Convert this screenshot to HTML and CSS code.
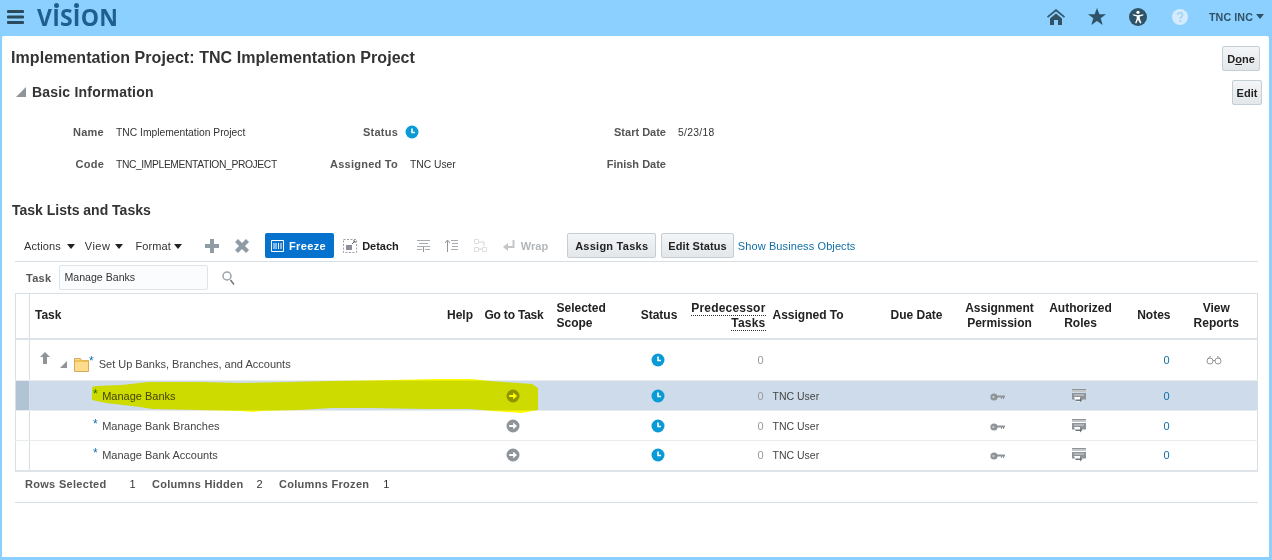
FILE: index.html
```html
<!DOCTYPE html>
<html lang="en">
<head>
<meta charset="utf-8">
<title>Implementation Project</title>
<link rel="stylesheet" href="styles.css">
</head>
<body>
<svg width="0" height="0" class="defs">
  <defs>
    <symbol id="clock" viewBox="0 0 14 14"><circle cx="7" cy="7" r="6.5" fill="#0a9ad6"/><path d="M7 3.5V7.5H10" fill="none" stroke="#fff" stroke-width="1.6"/></symbol>
    <symbol id="go" viewBox="0 0 14 14"><circle cx="7" cy="7" r="6.5" fill="#8f9499"/><path d="M3.2 6h4V3.4L11 7l-3.8 3.6V8h-4z" fill="#fff"/></symbol>
    <symbol id="key" viewBox="0 0 15 8"><circle cx="4" cy="4" r="3.6" fill="#8f9499"/><circle cx="3.4" cy="4" r="1" fill="#d5d8db"/><path d="M7 2.600h8v2h-1v1.400h-1V4.600h-1V6h-1V4.600H7z" fill="#8f9499"/></symbol>
    <symbol id="roles" viewBox="0 0 14 14"><path d="M0 0h14v1H0z" fill="#8f9499"/><path d="M0 1h14v2H0z" fill="#c4c7ca"/><path d="M0 4h14v6.500H0z" fill="#8f9499"/><path d="M2 5.500h10v1H2z" fill="#d5d8db"/><path d="M2 8h6v2l3 1.500L8 14v-1.500H4z" fill="#fff"/><path d="M3.500 10.500h4.500V9l2.500 2L8 13.500v-1.500H3.500z" fill="#6f777d"/></symbol>
  </defs>
</svg>
<header class="topbar">
  <div class="brand">
    <svg class="burger" viewBox="0 0 17 14" aria-hidden="true"><path d="M1 1.500h15M1 7h15M1 12.500h15" stroke="#2b4a5e" stroke-width="2.800" stroke-linecap="round" fill="none"/></svg>
    <span class="logo">V<span class="dot-i">I</span>S<span class="dot-i">I</span>ON</span>
  </div>
  <nav class="global">
    <svg class="g-home" viewBox="0 0 18 16" aria-hidden="true"><path d="M9 0 0 7.500l1 1.300L9 2.200l8 6.600 1-1.300zM3 9.500 9 4.500l6 5V16h-4v-5H7v5H3z" fill="#2f5266"/></svg>
    <svg class="g-star" viewBox="0 0 18 17" aria-hidden="true"><path d="m9 0 2.400 6.200H18l-5.300 4.100 2 6.700L9 13l-5.700 4 2-6.700L0 6.200h6.600z" fill="#2f5266"/></svg>
    <svg class="g-access" viewBox="0 0 18 18" aria-hidden="true"><circle cx="9" cy="9" r="9" fill="#2f5266"/><circle cx="9" cy="4.300" r="1.600" fill="#fff"/><path d="M3.500 6.200 9 7.200l5.500-1-.3 1.300-3.500 1 .2 2.500 1.500 4-1.200.4L9 11.800l-1.700 3.600-1.200-.4 1.500-4 .2-2.500-3.500-1z" fill="#fff"/></svg>
    <svg class="g-help" viewBox="0 0 16 16" aria-hidden="true"><circle cx="8" cy="8" r="8" fill="#d3ebfc"/><path d="M5.600 6a2.400 2.400 0 1 1 3.700 2c-.8.500-1 1-1 1.800" fill="none" stroke="#a3d4f5" stroke-width="1.700"/><rect x="7.300" y="11" width="1.900" height="1.900" fill="#a3d4f5"/></svg>
    <span class="account">TNC INC</span>
    <span class="account-caret"></span>
  </nav>
</header>

<main class="card">
  <div class="title-row">
    <h1>Implementation Project: TNC Implementation Project</h1>
    <button class="btn done">D<u>o</u>ne</button>
  </div>
  <div class="section-row">
    <h2><span class="tri"></span>Basic Information</h2>
    <button class="btn edit">Edit</button>
  </div>
  <div class="form">
    <span class="lbl">Name</span><span>TNC Implementation Project</span>
    <span class="lbl">Status</span><span><svg class="clock status-clock"><use href="#clock"/></svg></span>
    <span class="lbl tight">Start Date</span><span class="date">5/23/18</span>
    <span class="lbl">Code</span><span class="code">TNC_IMPLEMENTATION_PROJECT</span>
    <span class="lbl">Assigned To</span><span>TNC User</span>
    <span class="lbl tight">Finish Date</span><span></span>
  </div>

  <h3>Task Lists and Tasks</h3>

  <div class="toolbar">
    <span class="menu m-actions">Actions<i class="caret"></i></span>
    <span class="menu m-view">View<i class="caret"></i></span>
    <span class="menu m-format">Format<i class="caret"></i></span>
    <svg class="tb-plus" viewBox="0 0 14 14" aria-hidden="true"><path d="M5 0h4v5h5v4H9v5H5V9H0V5h5z" fill="#8f9ca5"/></svg>
    <svg class="tb-x" viewBox="0 0 14 14" aria-hidden="true"><path d="M3 0l4 4 4-4 3 3-4 4 4 4-3 3-4-4-4 4-3-3 4-4-4-4z" fill="#8f9ca5"/></svg>
    <span class="freeze">
      <svg viewBox="0 0 13 12" aria-hidden="true"><path d="M.5.500h12v11H.5zM3 3v6M5 3v6M7.500 3v6M10 3v6" fill="none" stroke="#fff"/></svg>Freeze
    </span>
    <span class="detach">
      <svg viewBox="0 0 14 14" aria-hidden="true"><path d="M.5.500h13v13H.5z" fill="none" stroke="#9aa0a5" stroke-dasharray="2 1.500"/><path d="M3 6h6v5H3z" fill="#8a9096"/><path d="M9 5l3-3M10 2h2v2" stroke="#666" fill="none"/></svg>Detach
    </span>
    <svg class="tb-i i1" viewBox="0 0 13 13" aria-hidden="true"><path d="M0 1h13v1H0zM2 4h9v1H2zM0 10h5v1H0zM8 10h5v1H8zM0 7h13v1H0z" fill="#a9adb1"/><path d="M6.500 8v5" stroke="#8f9499"/></svg>
    <svg class="tb-i i2" viewBox="0 0 13 13" aria-hidden="true"><path d="M6 1h7v1H6zM7 4h6v1H7zM7 7h6v1H7zM6 10h7v1H6z" fill="#a9adb1"/><path d="M2.500 13V2M0 4l2.500-3L5 4" stroke="#8f9499" fill="none"/></svg>
    <svg class="tb-i i3" viewBox="0 0 13 13" aria-hidden="true"><path d="M.5.500h4v4h-4zM.5 8.500h4v4h-4zM8.500 8.500h4v4h-4z" fill="none" stroke="#dcdfe1"/><path d="M5 3h5v4M5 10h3" fill="none" stroke="#cfd3d6"/></svg>
    <svg class="tb-wrap" viewBox="0 0 12 12" aria-hidden="true"><path d="M10.500 0v7H4" fill="none" stroke="#c3c7ca" stroke-width="2"/><path d="M5 3v8L0 7z" fill="#c3c7ca"/></svg>
    <span class="wrap">Wrap</span>
    <button class="btn tb-btn assign">Assign Tasks</button>
    <button class="btn tb-btn status-btn">Edit Status</button>
    <a class="show" href="#">Show Business Objects</a>
  </div>

  <div class="search">
    <label>Task</label>
    <span class="field">Manage Banks</span>
    <svg viewBox="0 0 13 14" aria-hidden="true"><circle cx="5" cy="5" r="4" fill="#fff" stroke="#9aa3a9" stroke-width="1.500"/><path d="m8.500 9 3.500 4.500" stroke="#6f777d" stroke-width="1.500"/></svg>
  </div>

  <table class="grid">
    <colgroup>
      <col class="c-sel"><col class="c-task"><col class="c-help"><col class="c-go"><col class="c-scope"><col class="c-status"><col class="c-pred"><col class="c-user"><col class="c-due"><col class="c-perm"><col class="c-roles"><col class="c-notes"><col class="c-rep">
    </colgroup>
    <thead>
      <tr>
        <th class="sel"></th>
        <th class="l task-h">Task</th>
        <th>Help</th>
        <th class="go-h">Go to Task</th>
        <th class="l scope">Selected<br>Scope</th>
        <th>Status</th>
        <th class="r pred"><span>Predecessor</span><br><span>Tasks</span></th>
        <th class="l user-h">Assigned To</th>
        <th class="l due">Due Date</th>
        <th>Assignment<br>Permission</th>
        <th>Authorized<br>Roles</th>
        <th class="notes-h">Notes</th>
        <th>View<br>Reports</th>
      </tr>
    </thead>
    <tbody>
      <tr class="parent">
        <td class="sel"></td>
        <td class="task">
          <div class="tree">
            <svg class="up" viewBox="0 0 10 12" aria-hidden="true"><path d="M5 0l5 5H7v7H3V5H0z" fill="#8f9499"/></svg>
            <span class="tri small"></span>
            <svg class="folder" viewBox="0 0 15 14" aria-hidden="true"><path d="M.5.500h6l1 2h7v11H.5z" fill="#fddc8c" stroke="#d2ab5e"/><path d="M1 3h13" stroke="#e9b949" stroke-width="1.500"/></svg>
            <span class="star">*</span>
            <span class="tree-label">Set Up Banks, Branches, and Accounts</span>
          </div>
        </td>
        <td></td><td></td><td></td>
        <td class="c"><svg class="clock"><use href="#clock"/></svg></td>
        <td class="zero">0</td>
        <td></td><td></td><td></td><td></td>
        <td class="note"><a href="#">0</a></td>
        <td class="c">
          <svg class="glasses" viewBox="0 0 16 9" aria-hidden="true"><path d="M1 5a3 3 0 1 0 6 0 3 3 0 1 0-6 0M9 5a3 3 0 1 0 6 0 3 3 0 1 0-6 0M7 4.500h2M1.500 3 4 .7h1M14.500 3 12 .7h-1" fill="none" stroke="#8f9499"/></svg>
        </td>
      </tr>
      <tr class="selected">
        <td class="sel"></td>
        <td class="child"><span class="star">*</span>Manage Banks</td>
        <td></td>
        <td class="c"><svg class="go"><use href="#go"/></svg></td>
        <td></td>
        <td class="c"><svg class="clock"><use href="#clock"/></svg></td>
        <td class="zero">0</td>
        <td class="user">TNC User</td>
        <td></td>
        <td class="c"><svg class="key"><use href="#key"/></svg></td>
        <td class="c"><svg class="roles"><use href="#roles"/></svg></td>
        <td class="note"><a href="#">0</a></td>
        <td></td>
      </tr>
      <tr>
        <td class="sel"></td>
        <td class="child"><span class="star">*</span>Manage Bank Branches</td>
        <td></td>
        <td class="c"><svg class="go"><use href="#go"/></svg></td>
        <td></td>
        <td class="c"><svg class="clock"><use href="#clock"/></svg></td>
        <td class="zero">0</td>
        <td class="user">TNC User</td>
        <td></td>
        <td class="c"><svg class="key"><use href="#key"/></svg></td>
        <td class="c"><svg class="roles"><use href="#roles"/></svg></td>
        <td class="note"><a href="#">0</a></td>
        <td></td>
      </tr>
      <tr>
        <td class="sel"></td>
        <td class="child"><span class="star">*</span>Manage Bank Accounts</td>
        <td></td>
        <td class="c"><svg class="go"><use href="#go"/></svg></td>
        <td></td>
        <td class="c"><svg class="clock"><use href="#clock"/></svg></td>
        <td class="zero">0</td>
        <td class="user">TNC User</td>
        <td></td>
        <td class="c"><svg class="key"><use href="#key"/></svg></td>
        <td class="c"><svg class="roles"><use href="#roles"/></svg></td>
        <td class="note"><a href="#">0</a></td>
        <td></td>
      </tr>
    </tbody>
  </table>

  <div class="statusbar">
    <span class="s-l s1">Rows Selected</span><span class="s-v v1">1</span>
    <span class="s-l s2">Columns Hidden</span><span class="s-v v2">2</span>
    <span class="s-l s3">Columns Frozen</span><span class="s-v v3">1</span>
  </div>
</main>

<svg class="marker" viewBox="0 0 446 36" aria-hidden="true">
  <path d="M0 9 4 8 30 7 56 4 110 4 148 5 240 3 300 2 345 1 380 1 398 3 440 6 446 10 446 32 430 35 400 33 378 31 332 31 280 30 240 30 208 32 170 33 160 34 148 33 60 31 48 29 14 25 0 22z" fill="#ffff00"/>
</svg>
</body>
</html>
```

FILE: styles.css
```css
* { box-sizing: border-box; }
html, body { margin: 0; height: 560px; overflow: hidden; }
body {
  background: #8cd0ff;
  font-family: "Liberation Sans", Arial, sans-serif;
  font-size: 11px;
  color: #333;
  position: relative;
}
.defs { position: absolute; }

/* top bar */
.topbar { height: 36px; display: flex; justify-content: space-between; align-items: center; padding: 0 8px 0 7px; }
.brand { display: flex; align-items: center; }
.burger { width: 17px; height: 14px; margin-top: -2px; }
.logo {
  font-family: "Open Sans", sans-serif;
  font-weight: 700;
  font-size: 23px;
  line-height: 23px;
  color: #1f5f8f;
  margin-left: 13px;
  letter-spacing: 0.2px;
  margin-top: -1px;
}
.dot-i { position: relative; }
.dot-i::before {
  content: "";
  position: absolute;
  left: 1.5px;
  top: 2px;
  width: 5px;
  height: 5px;
  border-radius: 50%;
  background: #1f5f8f;
}
.global { display: flex; align-items: center; margin-top: -3px; }
.g-home { width: 18px; height: 16px; }
.g-star { width: 18px; height: 17px; margin-left: 23px; }
.g-access { width: 18px; height: 18px; margin-left: 23px; }
.g-help { width: 16px; height: 16px; margin-left: 25px; }
.account { margin-left: 21px; font-size: 10.7px; color: #2f5266; font-weight: 700; letter-spacing: 0.1px; }
.account-caret { width: 0; height: 0; border: 4.5px solid transparent; border-top: 5px solid #2f5266; border-bottom: 0; margin-left: 3px; }

/* card */
.card { height: 521px; margin: 0 3px 0 2px; background: #fff; border-radius: 2px 2px 0 0; padding-right: 7px; }
.title-row { display: flex; justify-content: space-between; padding: 10px 2px 0 9px; height: 44px; }
h1 { margin: 3px 0 0; font-size: 16px; font-weight: 700; color: #333; line-height: 18px; letter-spacing: 0.06px; }
.btn {
  font-family: inherit;
  font-size: 11px;
  font-weight: 700;
  color: #222;
  height: 25px;
  padding: 0 4px;
  border: 1px solid #c3ced6;
  border-radius: 2px;
  background: linear-gradient(#f3f5f7, #e3e7ea);
}
.done { width: 38px; padding: 0; }
.edit { width: 30px; padding: 0; }
.section-row { display: flex; justify-content: space-between; height: 36px; }
h2 { margin: 4px 0 0 14px; height: 16px; font-size: 14px; line-height: 16px; color: #333; font-weight: 700; display: flex; align-items: center; letter-spacing: 0.2px; }
.tri { width: 0; height: 0; border-style: solid; border-width: 0 0 10px 10px; border-color: transparent transparent #8f9499 transparent; margin-right: 6px; }
.tri.small { border-width: 0 0 7px 7px; }
.form {
  display: grid;
  grid-template-columns: 89px 169px 101px 144px 100px 100px;
  column-gap: 12px;
  row-gap: 14px;
  grid-auto-rows: 18px;
  padding-left: 13px;
  margin-top: 7px;
  align-items: center;
  font-size: 10.3px;
}
.code { letter-spacing: -0.38px; }
.date { letter-spacing: 0.3px; }
.lbl { font-size: 11px; text-align: right; font-weight: 700; color: #555; letter-spacing: 0.25px; }
.lbl.tight { letter-spacing: 0; }
h3 { margin: 29px 0 0 10px; font-size: 14px; line-height: 16px; font-weight: 700; color: #333; }

/* toolbar */
.toolbar { margin: 15px 4px 0 13px; height: 29px; padding: 0 0 3px 9px; display: flex; align-items: center; border-bottom: 1px solid #d6dfe6; }
.menu { display: flex; align-items: center; letter-spacing: 0.1px; }
.caret { width: 0; height: 0; border: 4.5px solid transparent; border-top: 5px solid #222; border-bottom: 0; margin: 2px 0 0 6px; }
.m-view { margin-left: 10px; letter-spacing: 0.5px; }
.m-view .caret { margin-left: 5px; }
.m-format { margin-left: 12px; }
.m-format .caret { margin-left: 3px; }
.tb-plus { width: 14px; height: 14px; margin-left: 23px; }
.tb-x { width: 14px; height: 14px; margin-left: 16px; }
.freeze { display: flex; align-items: center; height: 25px; margin-left: 16px; padding: 0 8px 0 6px; border-radius: 2px; background: #0572ce; color: #fff; font-weight: 700; letter-spacing: 0.4px; }
.freeze svg { width: 13px; height: 12px; margin-right: 5px; }
.detach { display: flex; align-items: center; margin-left: 9px; font-weight: 700; color: #222; }
.detach svg { width: 14px; height: 14px; margin-right: 5px; }
.tb-i { width: 13px; height: 13px; }
.i1 { margin-left: 18px; }
.i2 { margin-left: 15px; }
.i3 { margin-left: 16px; }
.tb-wrap { width: 12px; height: 12px; margin-left: 16px; }
.wrap { margin-left: 6px; font-weight: 700; color: #b3b7ba; }
.tb-btn { padding: 0 7px; letter-spacing: 0.25px; }
.status-btn { padding: 0 6px; letter-spacing: 0.1px; }
.assign { margin-left: 19px; margin-right: 5px; }
.show { margin-left: 4px; color: #0f6fa8; text-decoration: none; letter-spacing: 0.1px; }

/* search */
.search { margin-left: 24px; height: 31px; display: flex; align-items: center; }
.search label { font-weight: 700; color: #555; letter-spacing: 0.3px; }
.field { width: 149px; height: 25px; margin-left: 8px; padding-left: 4px; line-height: 23px; font-size: 10.6px; border: 1px solid #dde4ea; background: #fbfcfd; border-radius: 2px; }
.search svg { width: 13px; height: 14px; margin-left: 14px; }

/* table */
.grid { table-layout: fixed; width: 1242px; margin-left: 13px; border-collapse: collapse; border: 1px solid #d6dfe6; border-bottom: 2px solid #dfe4e8; }
.c-sel { width: 14px; } .c-task { width: 412px; } .c-help { width: 37px; } .c-go { width: 71px; }
.c-scope { width: 82px; } .c-status { width: 55px; } .c-pred { width: 81px; } .c-user { width: 118px; }
.c-due { width: 73px; } .c-perm { width: 82px; } .c-roles { width: 80px; } .c-notes { width: 55px; } .c-rep { width: 82px; }
thead tr { height: 45px; }
th { padding: 0; font-size: 12px; line-height: 15px; font-weight: 700; color: #222; text-align: center; border-bottom: 2px solid #dbe2e8; }
th.l { text-align: left; padding-left: 5px; }
th.r { text-align: right; padding-right: 2px; }
th.scope { padding-left: 7px; }
th.go-h { letter-spacing: -0.2px; }
.task-h { padding-left: 5px; }
.pred span { border-bottom: 1px dotted #333; letter-spacing: 0.2px; }
.notes-h { text-align: right; padding-right: 5px; }
td { padding: 0; height: 30px; border-bottom: 1px solid #e8ecef; color: #444; }
.sel { border-right: 1px solid #d6dfe6; }
.parent td { height: 42px; }
.selected td { background: #cddbea; }
.selected .sel { background: #b0c4d6; }
.c { text-align: center; }
td svg { vertical-align: middle; }
.clock { width: 14px; height: 14px; margin-right: 2px; }
.form .status-clock { margin: 2px 0 0 -5px; }
.go { width: 14px; height: 14px; margin-right: 2px; }
.key { width: 15px; height: 8px; margin-right: 4px; }
.roles { width: 14px; height: 14px; margin-right: 3px; }
.glasses { width: 16px; height: 9px; margin-right: 5px; }
.zero { text-align: right; padding-right: 4px; color: #9a9a9a; }
.user { padding-left: 5px; font-size: 10.5px; }
.note { text-align: right; padding-right: 6px; }
.note a { color: #0f6fa8; text-decoration: none; }
.tree { display: flex; align-items: flex-start; padding: 0 0 0 10px; height: 34px; }
.up { width: 10px; height: 12px; margin-top: 9px; }
.tree .tri { margin: 18px 0 0 10px; }
.folder { width: 15px; height: 14px; margin: 15px 0 0 7px; }
.tree .star { margin: 11px 5px 0 0; font-size: 12px; }
.tree-label { margin-top: 15px; }
.star { color: #0f6fa8; }
.child { padding-left: 63px; }
.child .star { margin-right: 4.5px; font-size: 12px; line-height: 0; vertical-align: 2px; }

/* status bar */
.statusbar { margin: 0 4px 0 13px; height: 31px; display: flex; align-items: center; border-bottom: 1px solid #d6dfe6; padding: 0 0 6px 10px; font-weight: 700; color: #555; letter-spacing: 0.3px; }
.s-v { color: #333; font-weight: 400; }
.v1 { margin-left: 23px; }
.s2 { margin-left: 16px; }
.v2 { margin-left: 13px; }
.s3 { margin-left: 16px; }
.v3 { margin-left: 14px; }

/* hand-drawn highlighter stroke on top of the screenshot */
.marker { position: absolute; left: 92px; top: 378px; width: 446px; height: 36px; mix-blend-mode: multiply; pointer-events: none; }
```
